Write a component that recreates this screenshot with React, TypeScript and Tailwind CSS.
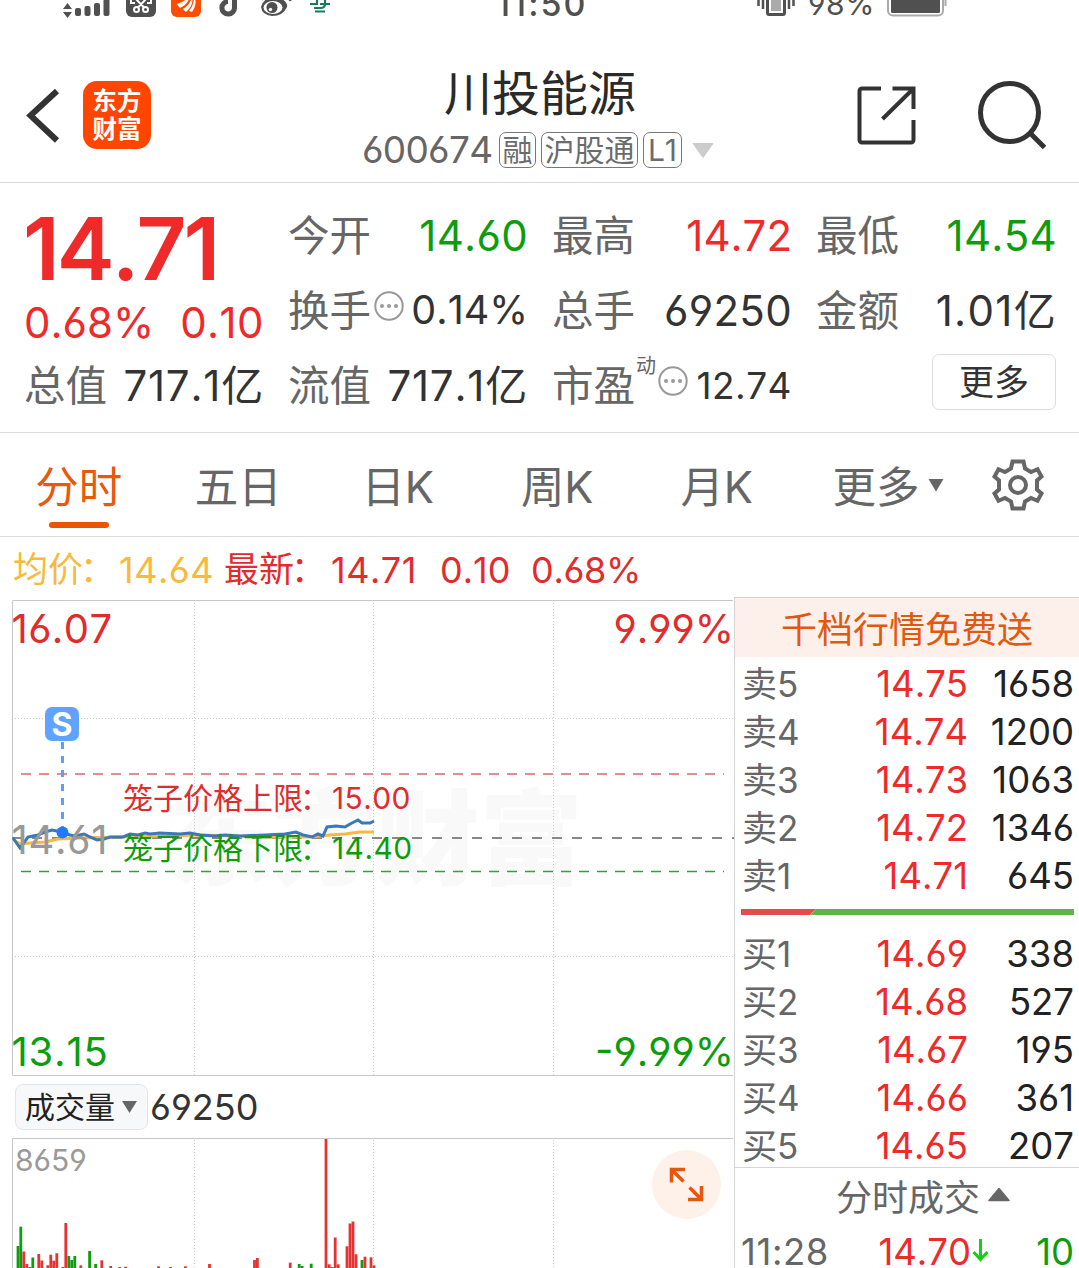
import clsx from "clsx";

const RED = "text-[#ee2a2a]";
const GREEN = "text-[#0c9c0c]";
const DARK = "text-[#333]";

const asks = [
  { label: "卖5", price: "14.75", volume: "1658" },
  { label: "卖4", price: "14.74", volume: "1200" },
  { label: "卖3", price: "14.73", volume: "1063" },
  { label: "卖2", price: "14.72", volume: "1346" },
  { label: "卖1", price: "14.71", volume: "645" },
];

const bids = [
  { label: "买1", price: "14.69", volume: "338" },
  { label: "买2", price: "14.68", volume: "527" },
  { label: "买3", price: "14.67", volume: "195" },
  { label: "买4", price: "14.66", volume: "361" },
  { label: "买5", price: "14.65", volume: "207" },
];

const tabs = ["分时", "五日", "日K", "周K", "月K"];

// [x, top, rising]
const volumeBars: [number, number, boolean][] = [
  [18, 1246, false], [20.8, 1226.7, false], [23.8, 1251.5, true], [26.8, 1264, true],
  [29.8, 1267, false], [32.8, 1257.5, false], [38.8, 1254, true], [41.8, 1260.5, true],
  [47.8, 1265.3, true], [50.8, 1254.7, true], [53.8, 1260.7, true], [56.8, 1253.3, true],
  [62.8, 1267, true], [65.8, 1223, true], [68.8, 1256, false], [71.8, 1260, false],
  [74.8, 1256, false], [80.8, 1265.3, true], [89.6, 1251, false], [95.6, 1264, false],
  [101.8, 1260.3, true], [110.7, 1266, true], [119.7, 1267, true], [125.7, 1266.7, true],
  [158.5, 1266.3, true], [170.5, 1267, true], [185.5, 1266.3, true], [209.5, 1264, true],
  [254.5, 1260, true], [257.4, 1258, true], [290.2, 1262.7, true], [299.2, 1264, false],
  [302.2, 1266, false], [311.2, 1263.7, false], [326, 1139, true], [329.2, 1264.3, true],
  [332.2, 1267, false], [335.2, 1237.5, true], [338.2, 1264.3, true], [347, 1246.3, true],
  [350, 1223.5, true], [353, 1221.5, true], [356, 1254.3, true], [362, 1260, false],
  [365, 1256.7, true], [371, 1257.3, true], [374, 1265.3, true],
];

function StatusBar() {
  return (
    <div className="flex h-[18px] items-end overflow-hidden text-[#505050]">
      <svg className="shrink-0" width="340" height="18" viewBox="0 0 340 18" fill="#505050">
        <path d="M63 9l4.500-6 4.500 6zM63 12l4.500 6 4.500-6z" />
        <rect x="75" y="8" width="6" height="8" rx="2" />
        <rect x="84.500" y="6" width="6" height="10" rx="2" />
        <rect x="94" y="3" width="6" height="13" rx="2" />
        <rect x="103.500" y="-4" width="6" height="20" rx="2" />
        <rect x="126" y="-12" width="30" height="29" rx="6" />
        <g fill="none" stroke="#fff" strokeWidth="2">
          <circle cx="136.500" cy="9.500" r="2.500" />
          <circle cx="145.500" cy="9.500" r="2.500" />
          <path d="M138 7.500L147-2M144 7.500L135-2M131-1v4h4M151-1v4h-4" />
        </g>
        <rect x="171" y="-12" width="30" height="29" rx="6" fill="#ff4d00" />
        <g fill="#fff">
          <path d="M177 4Q185 1 190-3Q187 5 180 8Q178 6 177 4z" />
          <path d="M183 9Q190 5 192-3Q194 5 186 12z" />
          <path d="M189 11Q194 5 194-3Q198 3 192 12z" />
        </g>
        <path
          d="M228 1.500a6.300 6.300 0 1 0 6.500 6V-6"
          fill="none"
          stroke="#505050"
          strokeWidth="5"
        />
        <path d="M261 7Q262 1 270-3L281-2Q288 3 287 7Q283 16 272 16Q262 15 261 7z" />
        <ellipse cx="273" cy="7.500" rx="9.500" ry="6.500" fill="#fff" />
        <circle cx="272" cy="7.500" r="5.500" />
        <circle cx="270.500" cy="9.500" r="1.700" fill="#fff" />
        <path d="M287-3q4 0 3 4" fill="none" stroke="#505050" strokeWidth="2.500" />
        <path
          d="M310 4h8M320 4h10M314 8h8M317-3v8M325-3v8q-1 3-4 3M315 11.500h10M314-1h14"
          fill="none"
          stroke="#177a5e"
          strokeWidth="2.200"
        />
      </svg>
      <span className="ml-[156px] w-[94px] text-[34px] leading-[28px] font-medium tracking-[2px]">11:50</span>
      <svg className="ml-[164px] shrink-0" width="46" height="18" viewBox="754 0 46 18">
        <path d="M758.500-5v11M763-5v14M789-5v14M793.500-5v11" stroke="#505050" strokeWidth="2.500" />
        <rect x="767.500" y="-10" width="17" height="24.500" rx="1.500" fill="#fff" stroke="#505050" strokeWidth="3" />
        <rect x="771" y="-6" width="10" height="17" fill="#aaa" />
      </svg>
      <span className="ml-[8px] w-[78px] text-[30px] leading-[27px] tracking-[0.5px]">98%</span>
      <svg width="64" height="18" viewBox="886 0 64 18">
        <rect x="888" y="-12" width="55" height="27.500" rx="5" fill="#fff" stroke="#aaa" strokeWidth="2" />
        <rect x="891" y="-8" width="49" height="21" rx="1.500" fill="#505050" />
        <path d="M945.500-4v10" stroke="#aaa" strokeWidth="2" />
      </svg>
    </div>
  );
}

function Tag({ children, className }: { children: string; className: string }) {
  return (
    <span
      className={clsx(
        "flex h-9 items-center justify-center rounded-[7px] border border-[#777] text-[30px] text-[#6c6c6c]",
        className,
      )}
    >
      {children}
    </span>
  );
}

function Header() {
  return (
    <header className="flex h-[165px] border-b border-[#d9d9d9] pt-[46px]">
      <svg className="mt-[22px] ml-[24px] shrink-0" width="38" height="60" viewBox="24 86 38 60">
        <path d="M57 91L30.500 115.500 57 140.500" fill="none" stroke="#333" strokeWidth="6" />
      </svg>
      <div className="mt-[17px] ml-[21px] flex size-[68px] shrink-0 flex-col items-center justify-center rounded-[14px] bg-[#ff4600] text-[24.500px] leading-[28px] font-bold text-white">
        <span>东方</span>
        <span>财富</span>
      </div>
      <div className="ml-[211px] w-[354px]">
        <h1 className="h-[58px] pl-[82px] text-[48px] leading-[60px] text-[#2a2a2a]">川投能源</h1>
        <div className="flex h-[58px] items-center pb-[2px]">
          <span className="w-[137px] text-[37px] tracking-[-0.7px] text-[#666]">600674</span>
          <Tag className="w-[37px]">融</Tag>
          <Tag className="ml-[5px] w-[97px]">沪股通</Tag>
          <Tag className="ml-[5px] w-[39px]">L1</Tag>
          <svg className="ml-[10px]" width="22" height="15" viewBox="0 0 22 15">
            <path d="M1 .500h20L11 14.500z" fill="#ccc" stroke="#ccc" strokeLinejoin="round" />
          </svg>
        </div>
      </div>
      <svg className="mt-[20px] ml-[139px] shrink-0" width="64" height="64" viewBox="855 84 64 64">
        <g fill="none" stroke="#333" strokeWidth="4">
          <path d="M881 88.500H862a2.500 2.500 0 0 0-2.500 2.500v49a2.500 2.500 0 0 0 2.500 2.500h49a2.500 2.500 0 0 0 2.500-2.500V120" />
          <path d="M892.500 88.500h21v20.500M913 89L882.500 119" />
        </g>
      </svg>
      <svg className="mt-[14px] ml-[56px] shrink-0" width="76" height="76" viewBox="975 78 76 76">
        <circle cx="1009.500" cy="112.500" r="29" fill="none" stroke="#333" strokeWidth="5" />
        <path d="M1030 133l14.500 14.500" stroke="#333" strokeWidth="5" />
      </svg>
    </header>
  );
}

function MoreDots({ className }: { className?: string }) {
  return (
    <svg className={clsx("mb-[9px] shrink-0", className)} width="30" height="30" viewBox="0 0 30 30">
      <circle cx="15" cy="15" r="13.700" fill="none" stroke="#999" strokeWidth="2" />
      <g fill="#999">
        <circle cx="8" cy="15" r="2" />
        <circle cx="15" cy="15" r="2" />
        <circle cx="22" cy="15" r="2" />
      </g>
    </svg>
  );
}

function Stat({
  label,
  value,
  color = DARK,
  spacing = "tracking-[0.3px]",
}: {
  label: string;
  value: string;
  color?: string;
  spacing?: string;
}) {
  return (
    <div className="flex h-[75px] items-center justify-between whitespace-nowrap">
      <span className="-ml-[1px] pt-[2px] text-[41.500px] text-[#666]">{label}</span>
      <span className={clsx("-mr-[1px] text-[42px]", spacing, color)}>{value}</span>
    </div>
  );
}

function Quote() {
  return (
    <section className="grid h-[250px] grid-cols-[238px_238px_238px_239px] content-start gap-x-[26px] border-b border-[#d9d9d9] pt-[15px] pl-[25px]">
      <div className={clsx("row-span-2", RED)}>
        <div className="ml-[-2px] h-[102px] text-[87px] leading-[102px] font-semibold tracking-[-3px]">14.71</div>
        <div className="-mr-[1px] -ml-[1px] flex h-[45px] items-center justify-between text-[42px]">
          <span>0.68%</span>
          <span className="tracking-[0.4px]">0.10</span>
        </div>
      </div>
      <Stat label="今开" value="14.60" color={GREEN} />
      <Stat label="最高" value="14.72" color={RED} spacing="tracking-normal" />
      <Stat label="最低" value="14.54" color={GREEN} />
      <div className="flex h-[75px] items-center">
        <span className="-ml-[1px] pt-[2px] text-[41.500px] text-[#666]">换手</span>
        <MoreDots className="ml-[3px]" />
        <span className={clsx("-mr-[1px] ml-auto text-[39.500px]", DARK)}>0.14%</span>
      </div>
      <Stat label="总手" value="69250" />
      <Stat label="金额" value="1.01亿" spacing="tracking-[1.3px]" />
      <Stat label="总值" value="717.1亿" spacing="tracking-[0.8px]" />
      <Stat label="流值" value="717.1亿" spacing="tracking-[0.8px]" />
      <div className="flex h-[75px] items-center">
        <span className="-ml-[1px] pt-[2px] text-[41.500px] text-[#666]">市盈</span>
        <span className="mb-[39px] ml-[1px] text-[20px] text-[#666]">动</span>
        <MoreDots className="ml-[2px]" />
        <span className={clsx("-mr-[1px] ml-auto text-[37px] tracking-[0.5px]", DARK)}>12.74</span>
      </div>
      <button className="mt-[6px] ml-auto flex h-[56px] w-[124px] items-center justify-center rounded-[7px] border border-[#ddd] text-[35px] text-[#333]">
        更多
      </button>
    </section>
  );
}

function Tabs() {
  return (
    <nav className="flex h-[104px] border-b border-[#d9d9d9] text-[43.500px] text-[#666]">
      {tabs.map((tab, i) => (
        <div
          key={tab}
          className={clsx("-ml-[1px] mr-[1px] flex w-[159.500px] flex-col items-center pt-[22px]", i === 0 && "text-[#e8590c]")}
        >
          <span className="leading-[64px]">{tab}</span>
          {i === 0 && <span className="mt-[3px] h-[6px] w-[60px] rounded-full bg-[#ea5504]" />}
        </div>
      ))}
      <span className="ml-[35px] pt-[22px] leading-[64px]">更多</span>
      <svg className="mt-[45px] ml-[8px]" width="16" height="14" viewBox="0 0 16 14">
        <path d="M.500 1h15L8 13.500z" fill="#666" />
      </svg>
      <svg className="mt-[25px] ml-[47px]" width="54" height="54" viewBox="-27 -27 54 54">
        <g fill="none" stroke="#666" strokeWidth="4">
          <path d="M-5.500-23.500h11L7-16.500 13-13l6.500-2.800 4 7.300-4.500 4v9l4.500 4-4 7.300L13 13l-6 3.500-1.500 7h-11L-7 16.500-13 13l-6.500 2.800-4-7.300 4.500-4v-9l-4.500-4 4-7.300L-13-13l6-3.500z" />
          <circle r="8" />
        </g>
      </svg>
    </nav>
  );
}

function PriceLegend() {
  return (
    <div className="flex h-[60px] items-center pt-[5px] pl-[13px] text-[36px] tracking-[0.5px] text-[#e02c2c]">
      <span className="w-[106px] text-[35px] tracking-normal text-[#f9b93c]">均价<span className="-ml-[3px]">：</span></span>
      <span className="w-[105px] text-[#f9b93c]">14.64</span>
      <span className="w-[107px] text-[35px] tracking-normal">最新<span className="-ml-[3px]">：</span></span>
      <span className="w-[109px]">14.71</span>
      <span className="w-[91px] tracking-normal">0.10</span>
      <span className="tracking-[-0.3px]">0.68%</span>
    </div>
  );
}

function PriceChart() {
  return (
    <svg className="block" width="734" height="481" viewBox="0 597 734 481">
      <text x="169" y="877" fontSize="103.500" fontWeight="900" fill="#f9f9f9">东方财富</text>
      <g stroke="#ccc" strokeDasharray="1 2">
        <path d="M15 718.500H733M15 956.500H733M194.500 603V1075M373.500 603V1075M553.500 603V1075" />
      </g>
      <path d="M733 600.500H12.500V1075.500H733" fill="none" stroke="#c8c8c8" />
      <path d="M21 774H724" stroke="#dc8f8f" strokeWidth="2" strokeDasharray="10 8" />
      <path d="M21 871.500H724" stroke="#2fa52f" strokeWidth="1.400" strokeDasharray="10 8" />
      <path d="M12 838H734" stroke="#888" strokeWidth="2" strokeDasharray="10 10" />
      <polyline
        points="14,840 20,844 30,843 45,842 58,839 80,838 120,837 160,836 200,835 260,837 310,837 330,835 345,834 360,832 374,832"
        fill="none"
        stroke="#f5b942"
        strokeWidth="3"
      />
      <polyline
        points="13,838 20,848 28,837 33,836 38,835 45,832 52,830 62,832 70,835 75,836 84,834 90,837 97,840 104,839 110,837 123,837 130,834 138,835 145,833 150,834 160,833 180,834 190,833 200,835 215,836 225,835 240,836 265,835 285,834 296,832 303,835 312,837 318,834 323,836 327,827 336,826 345,827 350,824 358,820 362,823 370,823 374,821"
        fill="none"
        stroke="#3b78bb"
        strokeWidth="3"
      />
      <path d="M62.500 742V828" stroke="#5aa0fa" strokeWidth="3" strokeDasharray="7 7" />
      <rect x="45" y="707" width="34" height="34" rx="7" fill="#5fa3ff" />
      <text x="62" y="735.500" fontSize="32" fontWeight="700" textAnchor="middle" fill="#fff">S</text>
      <g fontSize="40">
        <text x="11.500" y="643" letterSpacing="0.4" fill="#e02c2c">16.07</text>
        <text x="734" y="643" textAnchor="end" fill="#e02c2c">9.99%</text>
        <text x="11.500" y="854" letterSpacing="0.7" fill="#999">14.61</text>
        <text x="11.500" y="1066" letterSpacing="0.8" fill="#0c9c0c">13.15</text>
        <text x="734" y="1066" textAnchor="end" fill="#0c9c0c">-9.99%</text>
      </g>
      <circle cx="62.500" cy="832.500" r="6" fill="#1f7bff" />
      <g fontSize="30" fill="#e02c2c">
        <text x="123" y="809">笼子价格上限</text>
        <text x="300" y="809">：</text>
        <text x="332" y="809" letterSpacing="0.4">15.00</text>
      </g>
      <g fontSize="30" fill="#0c9c0c">
        <text x="123" y="859">笼子价格下限</text>
        <text x="300" y="859">：</text>
        <text x="332" y="859" letterSpacing="0.4">14.40</text>
      </g>
    </svg>
  );
}

function VolumeChart() {
  return (
    <svg className="block" width="734" height="132" viewBox="0 1136 734 132">
      <path d="M194.500 1140V1268M373.500 1140V1268M553.500 1140V1268" stroke="#ccc" strokeDasharray="1 2" />
      <path d="M12.500 1268V1138.500H733" fill="none" stroke="#c8c8c8" />
      {volumeBars.map(([x, top, rising]) => (
        <rect key={x} x={x - 1.4} y={top} width="2.800" height={1268 - top} fill={rising ? "#e53333" : "#109c10"} />
      ))}
      <text x="15" y="1171" fontSize="30" fill="#999">8659</text>
      <circle cx="686.500" cy="1184.500" r="34.500" fill="#fef1ea" />
      <g fill="none" stroke="#e0590f" strokeWidth="3.500">
        <path d="M671.500 1182.500V1169.500H685M672 1170L683.500 1181.500" />
        <path d="M688 1199.500H701.500V1186M701 1199L689.500 1187.500" />
      </g>
    </svg>
  );
}

function OrderRow({ label, price, volume }: { label: string; price: string; volume: string }) {
  return (
    <div className="flex h-12 items-center text-[36.500px]">
      <span className="w-[70px] text-[35px] text-[#666]">{label}</span>
      <span className="w-[156px] text-right text-[#ee2a2a]">{price}</span>
      <span className="w-[106px] text-right text-[#222]">{volume}</span>
    </div>
  );
}

function OrderBook() {
  return (
    <aside className="h-[671px] flex-1 overflow-hidden border-t border-l border-[#d5d5d5]">
      <div className="flex h-[59px] items-center justify-center bg-[#fdf0ea] pt-[4px] text-[36px] text-[#e0590f]">
        千档行情免费送
      </div>
      <div className="h-[511px] border-b border-[#d5d5d5] pt-[3px] pl-[7px]">
        {asks.map((row) => (
          <OrderRow key={row.label} {...row} />
        ))}
        <svg className="mt-[9px] mb-[15px] -ml-[1px] block" width="333" height="6" viewBox="0 0 333 6">
          <path d="M0 0H75L69 6H0z" fill="#e24c4c" />
          <path d="M75 0H333V6H69.500z" fill="#5fb548" />
        </svg>
        {bids.map((row) => (
          <OrderRow key={row.label} {...row} />
        ))}
      </div>
      <div className="flex h-[56px] items-center justify-center pt-[3px] pl-[32px] text-[36px] text-[#666]">
        分时成交
        <svg className="mb-[7px] ml-[8px]" width="22" height="15" viewBox="0 0 22 15">
          <path d="M11 1.500L21 13.500H1z" fill="#666" stroke="#666" strokeWidth="1.500" strokeLinejoin="round" />
        </svg>
      </div>
      <div className="flex h-[56px] items-center pl-[6px] text-[36.500px]">
        <span className="w-[99px] tracking-[0.6px] text-[#666]">11:28</span>
        <span className="w-[131px] text-right text-[#ee2a2a]">14.70</span>
        <svg className="mb-[4px] ml-[1px] shrink-0" width="17" height="24" viewBox="0 0 17 24">
          <path d="M8.500 1V21M1.500 14L8.500 21.500 15.500 14" fill="none" stroke="#14d014" strokeWidth="3" />
        </svg>
        <span className="w-[85px] text-right text-[#0c9c0c]">10</span>
      </div>
    </aside>
  );
}

export default function App() {
  return (
    <div className="h-[1268px] w-[1079px] overflow-hidden bg-white font-['Inter','Noto_Sans_CJK_SC',sans-serif] [font-feature-settings:'cv03','cv04'] [font-kerning:none]">
      <StatusBar />
      <Header />
      <Quote />
      <Tabs />
      <PriceLegend />
      <div className="flex">
        <div className="w-[734px]">
          <PriceChart />
          <div className="flex h-[58px] items-center pl-[15px]">
            <button className="flex h-[46px] w-[133px] items-center rounded-[8px] border border-[#e3e5e8] bg-[#f6f8fa] pl-[9px] text-[30px] text-[#222]">
              成交量
              <svg className="ml-[7px]" width="15" height="12" viewBox="0 0 15 12">
                <path d="M0 0H15L7.500 12z" fill="#666" />
              </svg>
            </button>
            <span className="ml-[2px] text-[36px] text-[#333]">69250</span>
          </div>
          <VolumeChart />
        </div>
        <OrderBook />
      </div>
    </div>
  );
}
